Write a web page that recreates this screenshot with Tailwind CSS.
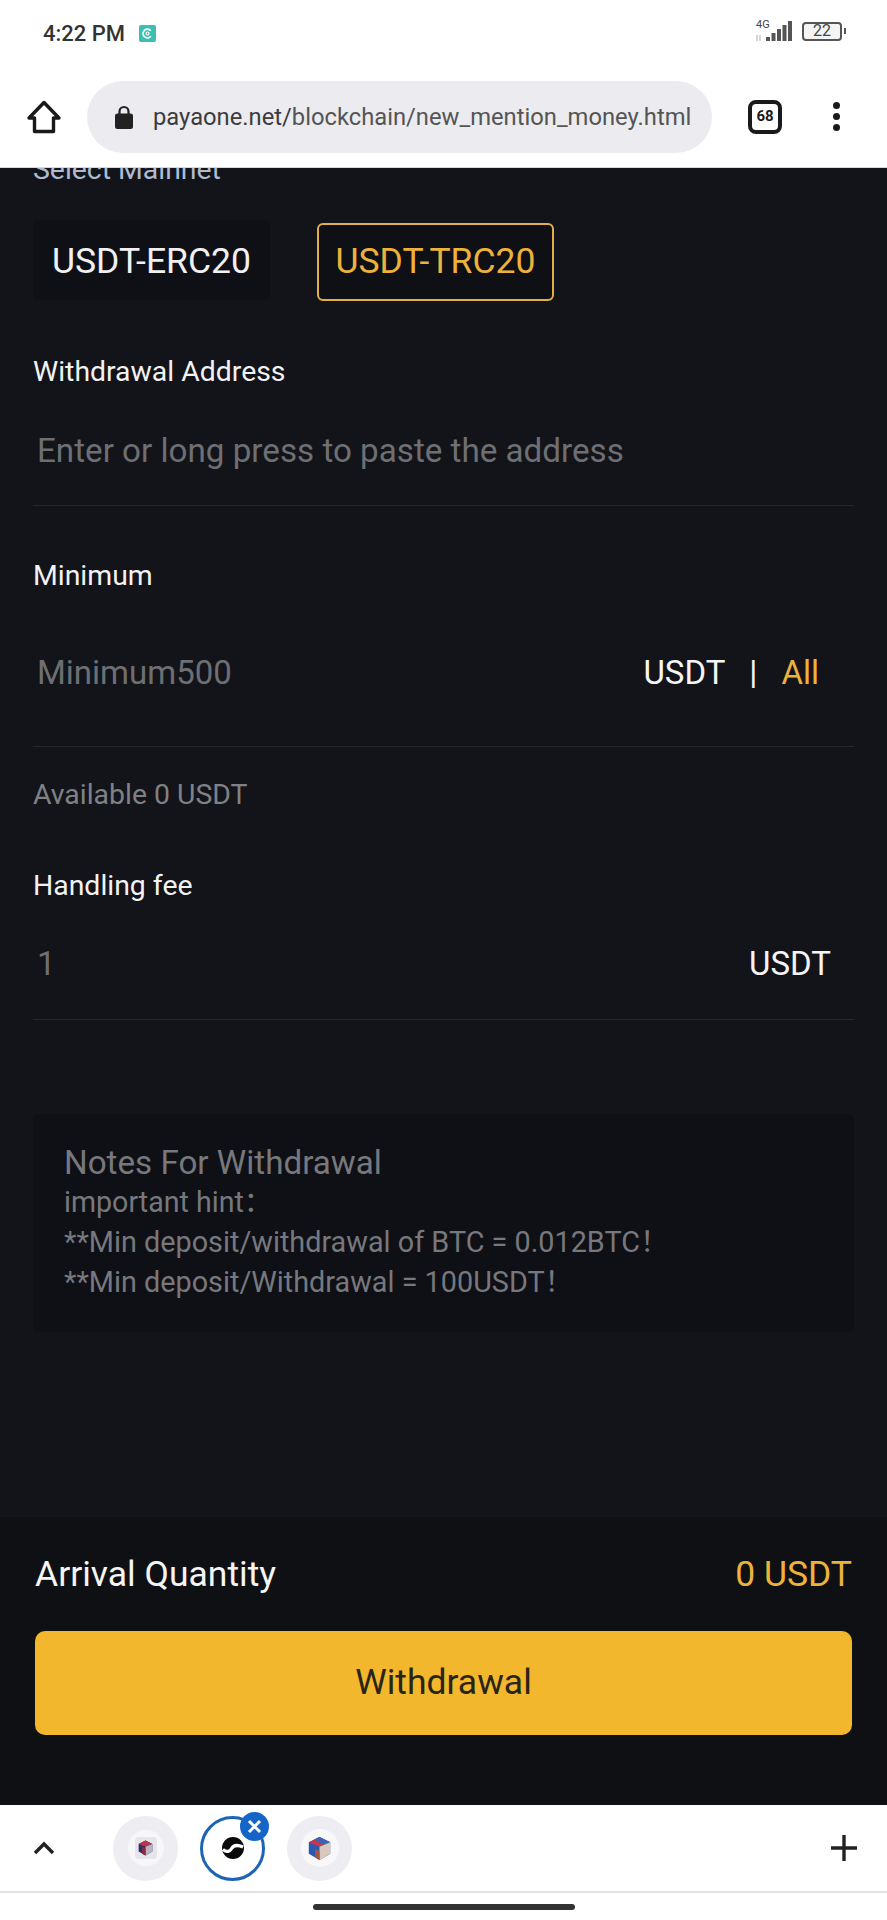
<!DOCTYPE html>
<html>
<head>
<meta charset="utf-8">
<script src="https://cdn.jsdelivr.net/npm/@tailwindcss/browser@4"></script>
</head>
<body class="m-0 bg-white font-['Roboto','Noto_Sans_CJK_SC',sans-serif]">
<div class="w-[887px] h-[1920px] flex flex-col overflow-hidden">
  <!-- status bar -->
  <div class="h-[66px] bg-white flex items-center justify-between pl-[43px] pr-[41px] shrink-0">
    <div class="flex items-center gap-[14px]">
      <span class="text-[22px] font-medium text-[#333]">4:22 PM</span>
      <svg width="17" height="17" viewBox="0 0 18 18"><rect width="18" height="18" rx="2" fill="#3bbfb2"/><path d="M12.5 6.2A4.6 4.6 0 1 0 12.5 11.8" fill="none" stroke="#fff" stroke-width="1.8"/><circle cx="9" cy="9" r="1.6" fill="none" stroke="#fff" stroke-width="1.2"/></svg>
    </div>
    <div class="flex items-center gap-[10px] mb-[4px]">
      <div class="relative w-[36px] h-[22px]">
        <span class="absolute left-[0px] top-[-1px] text-[11px] leading-[12px] text-[#444]">4G</span>
        <svg class="absolute left-0 top-0" width="36" height="22" viewBox="0 0 36 22"><path d="M1 15v6M4 15v6" stroke="#bbb" stroke-width="1.2"/><rect x="10" y="17" width="4" height="4" fill="#555"/><rect x="15.5" y="13" width="4" height="8" fill="#555"/><rect x="21" y="9" width="4" height="12" fill="#555"/><rect x="26.5" y="5" width="4" height="16" fill="#555"/><rect x="32" y="1" width="4" height="20" fill="#555"/></svg>
      </div>
      <div class="flex items-center gap-[2px]">
        <div class="w-[40px] h-[19px] border-2 border-[#555] rounded-[4px] flex items-center justify-center text-[16px] leading-none text-[#444] bg-[#f4f4f4]">22</div>
        <div class="w-[2px] h-[6px] bg-[#555]"></div>
      </div>
    </div>
  </div>
  <!-- toolbar -->
  <div class="h-[102px] bg-white flex items-center pl-[26px] border-b border-[#d8d8d8] shrink-0">
    <svg class="shrink-0" width="36" height="34" viewBox="0 0 36 34"><path d="M18 2.5 33 18h-5.5v13.5h-19V18H3Z" fill="none" stroke="#1a1a1a" stroke-width="3.4" stroke-linejoin="round"/></svg>
    <div class="ml-[25px] w-[625px] h-[72px] rounded-full bg-[#ebebf0] flex items-center pl-[28px] shrink-0">
      <svg class="shrink-0" width="18" height="24" viewBox="0 0 18 24"><path d="M4.5 10V6.5a4.5 4.5 0 0 1 9 0V10" fill="none" stroke="#222" stroke-width="2.2"/><rect x="0" y="8.5" width="18" height="15.5" rx="2.5" fill="#222"/></svg>
      <span class="ml-[20px] pt-[2px] text-[23.75px] leading-none text-[#3c3c3c] whitespace-nowrap">payaone.net/<span class="text-[#555]">blockchain/new_mention_money.html</span></span>
    </div>
    <div class="ml-[36px] w-[34px] h-[34px] border-[4px] border-[#1a1a1a] rounded-[8px] flex items-center justify-center text-[15px] font-bold text-[#1a1a1a] shrink-0">68</div>
    <div class="ml-[51px] flex flex-col gap-[4px] shrink-0">
      <div class="w-[7px] h-[7px] rounded-full bg-[#1a1a1a]"></div>
      <div class="w-[7px] h-[7px] rounded-full bg-[#1a1a1a]"></div>
      <div class="w-[7px] h-[7px] rounded-full bg-[#1a1a1a]"></div>
    </div>
  </div>
  <!-- page -->
  <div class="h-[1637px] bg-[#131419] overflow-hidden flex flex-col shrink-0">
    <div class="pl-[33px] pr-[33px] grow">
      <div class="mt-[-14px] h-[32px] leading-[32px] text-[28.4px] text-[#aebbd0]">Select Mainnet</div>
      <div class="mt-[34px] flex gap-[47px]">
        <div class="w-[237px] h-[80px] pt-[4px] bg-[#0f1015] rounded-[6px] flex items-center justify-center text-[35.5px] text-[#f0f0f2]">USDT-ERC20</div>
        <div class="w-[237px] h-[78px] mt-[3px] bg-[#0f1015] rounded-[6px] border-2 border-[#e3ae45] flex items-center justify-center text-[35.5px] text-[#edb23b]">USDT-TRC20</div>
      </div>
      <div class="mt-[55px] h-[32px] leading-[32px] text-[28.4px] text-[#f2f2f2]">Withdrawal Address</div>
      <div class="mt-[20px] h-[98px] border-b border-[#26272d] pl-[4px] pt-[24px] text-[33.2px] leading-[38px] text-[#6e6f73]">Enter or long press to paste the address</div>
      <div class="mt-[54px] h-[32px] leading-[32px] text-[28.4px] text-[#f2f2f2]">Minimum</div>
      <div class="mt-[62px] flex items-center h-[38px] pl-[4px] text-[33px] leading-[38px]">
        <span class="text-[#6e6f73]">Minimum500</span>
        <span class="ml-auto text-[#f5f5f5]">USDT</span>
        <span class="ml-[24px] text-[#f5f5f5]">|</span>
        <span class="ml-[24px] mr-[35px] text-[#edb23b]">All</span>
      </div>
      <div class="mt-[54px] border-t border-[#26272d]"></div>
      <div class="mt-[32px] h-[32px] leading-[32px] text-[28.4px] text-[#808186]">Available 0 USDT</div>
      <div class="mt-[59px] h-[32px] leading-[32px] text-[28.4px] text-[#f2f2f2]">Handling fee</div>
      <div class="mt-[43px] flex items-center h-[38px] pl-[4px] text-[33px] leading-[38px]">
        <span class="text-[#6e6f73]">1</span>
        <span class="ml-auto mr-[23px] text-[#f5f5f5]">USDT</span>
      </div>
      <div class="mt-[36px] border-t border-[#26272d]"></div>
      <div class="mt-[94px] h-[218px] bg-[#0f1015] rounded-[6px] px-[31px] pt-[30px] text-[#77787d]">
        <div class="text-[33.2px] leading-[38px]">Notes For Withdrawal</div>
        <div class="text-[28.6px] leading-[40px]">important hint：</div>
        <div class="text-[28.8px] leading-[40px]">**Min deposit/withdrawal of BTC = 0.012BTC！</div>
        <div class="text-[28.8px] leading-[40px]">**Min deposit/Withdrawal = 100USDT！</div>
      </div>
    </div>
    <div class="h-[288px] bg-[#0f1014] shrink-0 pl-[35px] pr-[35px] pt-[38px]">
      <div class="flex justify-between items-center h-[40px] text-[35.5px]">
        <span class="text-[#f5f5f5]">Arrival Quantity</span>
        <span class="text-[#edb23b]">0 USDT</span>
      </div>
      <div class="mt-[36px] h-[104px] rounded-[10px] bg-[#f2b72d] flex items-center justify-center text-[35.5px] text-[#2a2418]">Withdrawal</div>
    </div>
  </div>
  <!-- tabs bar -->
  <div class="h-[88px] bg-white border-b-2 border-[#e2e2e2] flex items-center shrink-0 relative">
    <svg class="ml-[33px] shrink-0" width="22" height="14" viewBox="0 0 22 14"><path d="M2 12 11 3l9 9" fill="none" stroke="#222" stroke-width="3.4"/></svg>
    <div class="ml-[58px] w-[65px] h-[65px] rounded-full bg-[#eeeef2] flex items-center justify-center shrink-0">
      <div class="w-[36px] h-[36px] rounded-full bg-[#f7f7f9] flex items-center justify-center">
        <div class="w-[22px] h-[22px] rounded-[4px] bg-[#e6e6ea] flex items-center justify-center">
          <svg width="15" height="16" viewBox="0 0 26 28"><path d="M13 1 25 7v13l-12 7-12-7V7Z" fill="#26336d"/><path d="M13 1 25 7 13 12 1 7Z" fill="#c2304a"/><path d="M13 12l12-5v13l-12 7Z" fill="#b9b4c2"/><path d="M7 12l6 3v12l-6-3Z" fill="#8e2a3c"/></svg>
        </div>
      </div>
    </div>
    <div class="ml-[22px] relative w-[65px] h-[65px] rounded-full border-[3px] border-[#1c65b4] bg-white flex items-center justify-center shrink-0">
      <svg width="22" height="22" viewBox="0 0 24 24"><circle cx="12" cy="12" r="12" fill="#0a0a0a"/><path d="M1 13.5C5 17 8.5 16 10.5 12.5S16 8 23 11" fill="none" stroke="#fff" stroke-width="3.6"/></svg>
      <div class="absolute right-[-7px] top-[-7px] w-[29px] h-[29px] rounded-full bg-[#1565c9] flex items-center justify-center">
        <svg width="15" height="15" viewBox="0 0 15 15"><path d="M2 2l11 11M13 2 2 13" stroke="#fff" stroke-width="3"/></svg>
      </div>
    </div>
    <div class="ml-[22px] w-[65px] h-[65px] rounded-full bg-[#eeeef2] flex items-center justify-center shrink-0">
      <div class="w-[38px] h-[38px] rounded-full bg-[#f8f8fa] flex items-center justify-center">
        <svg width="25" height="25" viewBox="0 0 26 28"><path d="M13 1 25 7v13l-12 7-12-7V7Z" fill="#2b58b0"/><path d="M13 1 25 7 13 12 1 7Z" fill="#c9354a"/><path d="M13 1 25 7 18 10 7 4Z" fill="#3a64b8"/><path d="M13 12l12-5v13l-12 7Z" fill="#d9c8bd"/><path d="M8 14l5 3v10l-5-3Z" fill="#a4553d"/></svg>
      </div>
    </div>
    <svg class="ml-auto mr-[30px] shrink-0" width="26" height="26" viewBox="0 0 26 26"><path d="M13 0v26M0 13h26" stroke="#222" stroke-width="3.4"/></svg>
  </div>
  <!-- gesture area -->
  <div class="grow bg-white flex justify-center pt-[11px]">
    <div class="w-[262px] h-[6px] rounded-full bg-[#333]"></div>
  </div>
</div>
</body>
</html>
